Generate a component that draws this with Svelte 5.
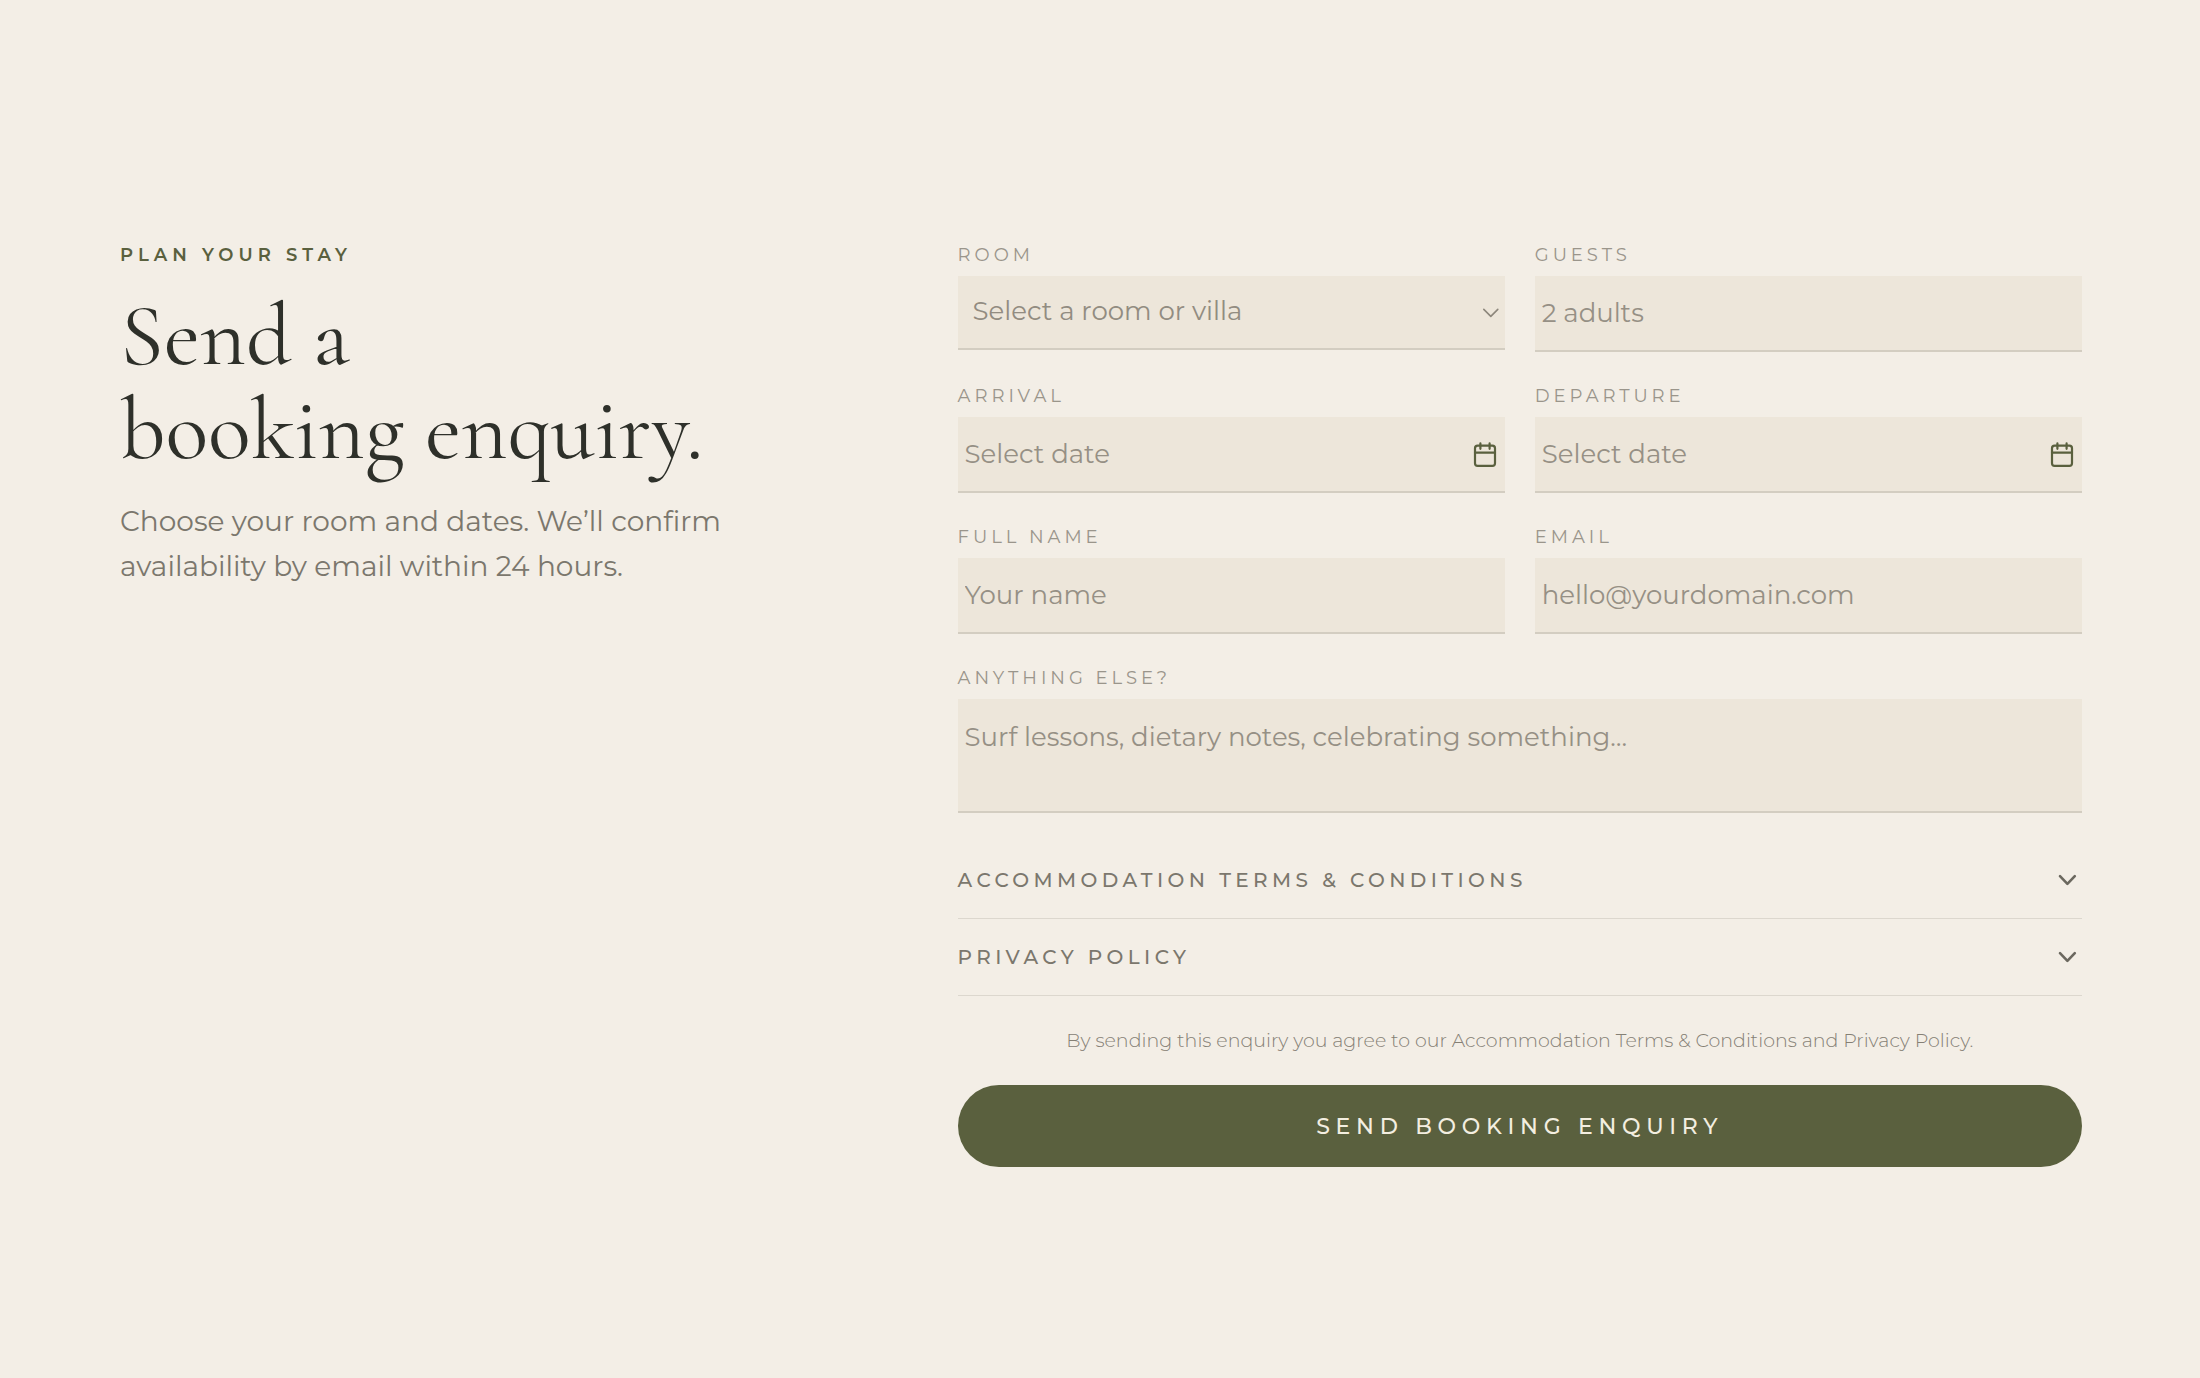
<script>
    const rooms = ['Garden room', 'Ocean room', 'Pool villa'];

    const policies = [
        { id: 'terms', title: 'Accommodation Terms & Conditions', body: 'Rates are per night and include breakfast.' },
        { id: 'privacy', title: 'Privacy Policy', body: 'We only use your details to answer your enquiry.' }
    ];

    let form = $state({ room: '', guests: '', arrival: '', departure: '', name: '', email: '', notes: '' });

    const submit = (event) => {
        event.preventDefault();
    };
</script>

<svelte:head>
    <title>Plan your stay</title>
</svelte:head>

{#snippet dateField(id, label)}
    <div class="field">
        <label for={id}>{label}</label>
        <div class="control">
            <input {id} type="text" placeholder="Select date" bind:value={form[id]} />
            <svg class="calendar" viewBox="0 0 26 26" fill="none" stroke="currentColor" stroke-width="2.2" stroke-linecap="round" aria-hidden="true">
                <rect x="3" y="3.6" width="20" height="20.2" rx="2.6" />
                <path d="M3 10.6h20M8.4 1.4v5.4M17.6 1.4v5.4" />
            </svg>
        </div>
    </div>
{/snippet}

<section class="enquiry">
    <div class="intro">
        <p class="eyebrow">Plan your stay</p>
        <h2>Send a<br />booking enquiry.</h2>
        <p class="lead">Choose your room and dates. We’ll confirm<br />availability by email within 24 hours.</p>
    </div>

    <form onsubmit={submit}>
        <div class="fields">
            <div class="field">
                <label for="room">Room</label>
                <div class="control">
                    <select id="room" bind:value={form.room}>
                        <option value="">Select a room or villa</option>
                        {#each rooms as room (room)}
                            <option value={room}>{room}</option>
                        {/each}
                    </select>
                    <svg class="caret" viewBox="0 0 20 20" fill="none" stroke="currentColor" stroke-width="1.6" stroke-linecap="round" stroke-linejoin="round" aria-hidden="true">
                        <path d="M2.8 6.4l7 7 7-7" />
                    </svg>
                </div>
            </div>
            <div class="field">
                <label for="guests">Guests</label>
                <input id="guests" type="text" placeholder="2 adults" bind:value={form.guests} />
            </div>

            {@render dateField('arrival', 'Arrival')}
            {@render dateField('departure', 'Departure')}

            <div class="field">
                <label for="name">Full name</label>
                <input id="name" type="text" placeholder="Your name" bind:value={form.name} />
            </div>
            <div class="field">
                <label for="email">Email</label>
                <input id="email" type="email" placeholder="hello@yourdomain.com" bind:value={form.email} />
            </div>
            <div class="field wide">
                <label for="notes">Anything else?</label>
                <textarea id="notes" placeholder="Surf lessons, dietary notes, celebrating something…" bind:value={form.notes}></textarea>
            </div>
        </div>

        <div class="policies">
            {#each policies as policy (policy.id)}
                <details>
                    <summary>
                        <span>{policy.title}</span>
                        <svg viewBox="0 0 28 28" fill="none" stroke="currentColor" stroke-width="2.6" stroke-linecap="round" stroke-linejoin="round" aria-hidden="true">
                            <path d="M6 10.2l7.4 7.6 7.4-7.6" />
                        </svg>
                    </summary>
                    <p>{policy.body}</p>
                </details>
            {/each}
        </div>

        <p class="consent">By sending this enquiry you agree to our Accommodation Terms &amp; Conditions and Privacy Policy.</p>
        <button type="submit">Send booking enquiry</button>
    </form>
</section>

<style>
    :global(body) {
        margin: 0;
        background: #f3eee6;
    }

    .enquiry {
        display: grid;
        grid-template-columns: 2fr 3fr;
        gap: 88px;
        align-items: start;
        padding: 244px 118px 210px 120px;
        font-family: Montserrat, Inter, sans-serif;
        color: #7b776d;
    }

    .eyebrow {
        margin: 0 0 22px;
        font-size: 18px;
        line-height: 23px;
        font-weight: 600;
        letter-spacing: 0.28em;
        text-transform: uppercase;
        color: #5a603e;
    }

    h2 {
        margin: 0 0 22px;
        font-family: 'Cormorant Garamond', 'Liberation Serif', serif;
        font-size: 89px;
        line-height: 94px;
        font-weight: 400;
        color: #2e302a;
    }

    .lead {
        margin: 0;
        font-size: 28px;
        line-height: 45px;
    }

    .fields {
        display: grid;
        grid-template-columns: 1fr 1fr;
        gap: 33px 30px;
        align-items: start;
    }

    .field {
        display: flex;
        flex-direction: column;
        gap: 9px;
        min-width: 0;
    }

    .wide {
        grid-column: 1 / -1;
    }

    label {
        font-size: 18px;
        line-height: 23px;
        letter-spacing: 0.22em;
        text-transform: uppercase;
        color: #9a958b;
    }

    input,
    select,
    textarea {
        box-sizing: border-box;
        width: 100%;
        height: 76px;
        margin: 0;
        padding: 0 7px;
        border: 0;
        border-bottom: 2px solid #d3cdc1;
        border-radius: 0;
        outline: none;
        background: #ede6da;
        font-family: inherit;
        font-size: 26px;
        color: #928c81;
    }

    input::placeholder,
    textarea::placeholder {
        color: #969085;
        opacity: 1;
    }

    select {
        height: 74px;
        padding: 0 40px 2px 15px;
        appearance: none;
    }

    textarea {
        display: block;
        height: 114px;
        padding: 21px 7px;
        line-height: 34px;
        resize: none;
    }

    .control {
        display: grid;
        align-items: center;
    }

    .control > * {
        grid-area: 1 / 1;
    }

    .control svg {
        justify-self: end;
        pointer-events: none;
    }

    .caret {
        width: 20px;
        height: 20px;
        margin-right: 4px;
        color: #8d877c;
    }

    .calendar {
        width: 26px;
        height: 26px;
        margin-right: 7px;
        color: #5a603e;
    }

    .policies {
        margin-top: 29px;
    }

    details {
        border-bottom: 1px solid #dcd7ce;
    }

    summary {
        display: flex;
        align-items: center;
        justify-content: space-between;
        height: 76px;
        font-size: 20px;
        font-weight: 500;
        letter-spacing: 0.22em;
        text-transform: uppercase;
        list-style: none;
        cursor: pointer;
    }

    summary svg {
        width: 28px;
        height: 28px;
        color: #6b685f;
    }

    details p {
        margin: 0 0 24px;
        font-size: 18px;
        line-height: 30px;
    }

    .consent {
        margin: 30px 0 29px;
        font-size: 19px;
        line-height: 30px;
        font-weight: 300;
        text-align: center;
        color: #858075;
    }

    button {
        width: 100%;
        height: 82px;
        border: 0;
        border-radius: 41px;
        background: #5a603e;
        font-family: inherit;
        font-size: 22px;
        font-weight: 500;
        letter-spacing: 0.26em;
        text-transform: uppercase;
        color: #f3eee0;
        cursor: pointer;
    }

    @media (max-width: 1100px) {
        .enquiry {
            grid-template-columns: 1fr;
            padding: 80px 32px;
        }
    }
</style>
